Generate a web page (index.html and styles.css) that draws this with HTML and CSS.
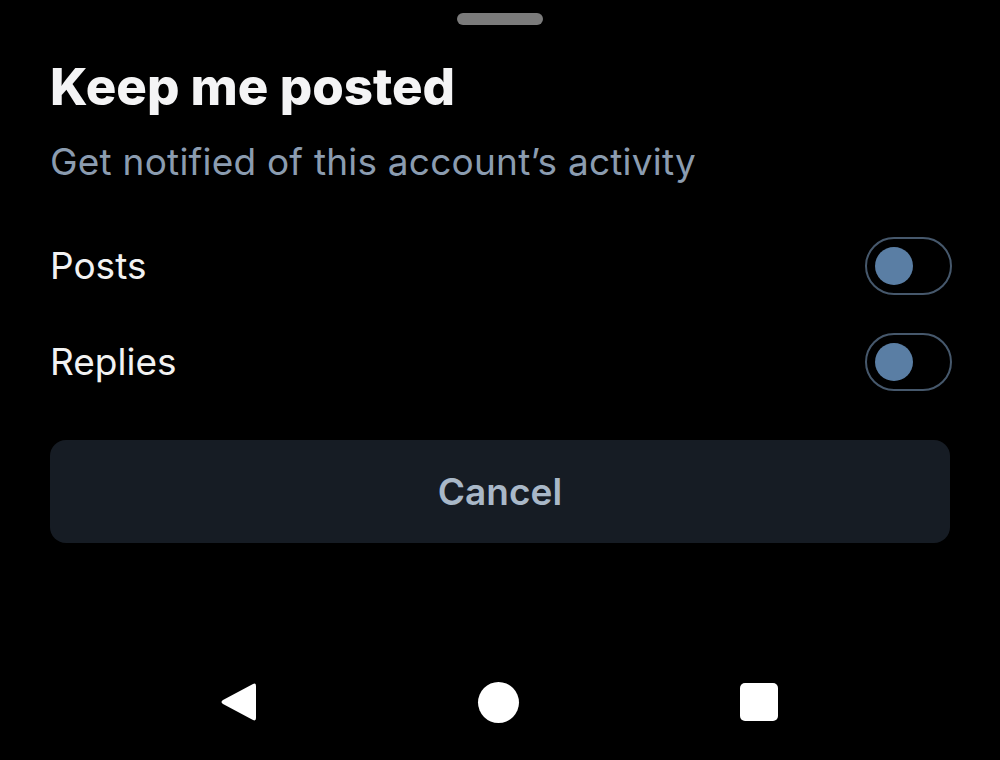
FILE: index.html
```html
<!DOCTYPE html>
<html>
<head>
<meta charset="utf-8">
<link rel="stylesheet" href="styles.css">
</head>
<body>
<div class="screen">
  <div class="sheet">
    <div class="handle"></div>
    <h1 class="title">Keep me posted</h1>
    <p class="subtitle">Get notified of this account’s activity</p>
    <div class="options">
      <div class="row">
        <span class="label">Posts</span>
        <span class="toggle"><span class="knob"></span></span>
      </div>
      <div class="row">
        <span class="label">Replies</span>
        <span class="toggle"><span class="knob"></span></span>
      </div>
    </div>
    <button class="cancel">Cancel</button>
  </div>
  <nav class="navbar">
    <svg class="nav-back" width="38" height="42" viewBox="0 0 38 42"><path d="M34 3 Q37 1.5 37 5 L37 37 Q37 40.5 34 39 L4 23 Q1 21 4 19 Z" fill="#fff"/></svg>
    <span class="nav-home"></span>
    <span class="nav-recent"></span>
  </nav>
</div>
</body>
</html>
```
FILE: styles.css
```css
* { box-sizing: border-box; }
html, body {
  margin: 0;
  padding: 0;
  background: #000;
}
body {
  width: 1000px;
  height: 760px;
  overflow: hidden;
  font-family: Inter, "Noto Sans", sans-serif;
}
.screen {
  height: 760px;
  display: flex;
  flex-direction: column;
  justify-content: space-between;
}
.sheet {
  display: flex;
  flex-direction: column;
  padding: 13px 50px 0;
}
.handle {
  align-self: center;
  width: 86px;
  height: 12px;
  border-radius: 6px;
  background: #7b7b7b;
}
.title {
  margin: 33px 0 0;
  font-size: 51px;
  line-height: 58px;
  font-weight: 800;
  color: #f4f4f5;
}
.subtitle {
  margin: 24px 0 0;
  font-size: 37px;
  line-height: 44px;
  font-weight: 400;
  letter-spacing: 0.22px;
  color: #8b9cb0;
}
.options {
  display: flex;
  flex-direction: column;
  margin-top: 34px;
}
.row {
  display: flex;
  align-items: center;
  justify-content: space-between;
  height: 96px;
}
.label {
  font-size: 37px;
  line-height: 44px;
  color: #f2f2f2;
}
.toggle {
  width: 87px;
  height: 58px;
  margin-right: -2px;
  border: 2px solid #46586c;
  border-radius: 29px;
  display: flex;
  align-items: center;
  padding-left: 8px;
}
.knob {
  width: 38px;
  height: 38px;
  border-radius: 50%;
  background: #5a7ea4;
}
.cancel {
  margin-top: 30px;
  height: 103px;
  border: none;
  border-radius: 16px;
  background: #161c24;
  color: #a9b8c8;
  font-family: Inter, "Noto Sans", sans-serif;
  font-size: 37px;
  font-weight: 600;
}
.navbar {
  display: flex;
  align-items: center;
  justify-content: space-between;
  padding: 0 222px 0 219px;
  height: 116px;
}
.nav-home {
  width: 41px;
  height: 41px;
  border-radius: 50%;
  background: #fff;
}
.nav-recent {
  width: 38px;
  height: 38px;
  border-radius: 5px;
  background: #fff;
}
```
